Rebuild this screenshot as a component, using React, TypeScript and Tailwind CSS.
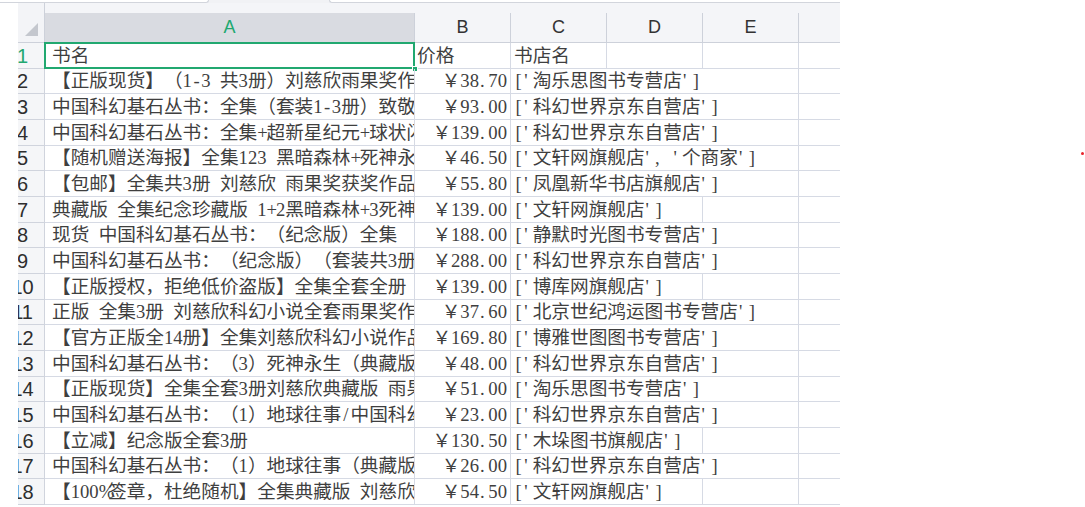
import React from "react";

type Row = { a: string; b: string; c: string; span: number; right: boolean };

const rows: Row[] = [
  { a: "书名", b: "价格", c: "书店名", span: 1, right: false },
  { a: "【正版现货】（1-3 共3册）刘慈欣雨果奖作品 三体全集", b: "￥38.70", c: "['淘乐思图书专营店']", span: 3, right: true },
  { a: "中国科幻基石丛书：全集（套装1-3册）致敬经典", b: "￥93.00", c: "['科幻世界京东自营店']", span: 3, right: true },
  { a: "中国科幻基石丛书：全集+超新星纪元+球状闪电", b: "￥139.00", c: "['科幻世界京东自营店']", span: 3, right: true },
  { a: "【随机赠送海报】全集123 黑暗森林+死神永生", b: "￥46.50", c: "['文轩网旗舰店', '个商家']", span: 3, right: true },
  { a: "【包邮】全集共3册 刘慈欣 雨果奖获奖作品", b: "￥55.80", c: "['凤凰新华书店旗舰店']", span: 3, right: true },
  { a: "典藏版 全集纪念珍藏版 1+2黑暗森林+3死神永生", b: "￥139.00", c: "['文轩网旗舰店']", span: 2, right: true },
  { a: "现货 中国科幻基石丛书：（纪念版）全集", b: "￥188.00", c: "['静默时光图书专营店']", span: 3, right: true },
  { a: "中国科幻基石丛书：（纪念版）（套装共3册）", b: "￥288.00", c: "['科幻世界京东自营店']", span: 3, right: true },
  { a: "【正版授权，拒绝低价盗版】全集全套全册", b: "￥139.00", c: "['博库网旗舰店']", span: 2, right: true },
  { a: "正版 全集3册 刘慈欣科幻小说全套雨果奖作品", b: "￥37.60", c: "['北京世纪鸿运图书专营店']", span: 3, right: true },
  { a: "【官方正版全14册】全集刘慈欣科幻小说作品集", b: "￥169.80", c: "['博雅世图图书专营店']", span: 3, right: true },
  { a: "中国科幻基石丛书：（3）死神永生（典藏版）", b: "￥48.00", c: "['科幻世界京东自营店']", span: 3, right: true },
  { a: "【正版现货】全集全套3册刘慈欣典藏版 雨果奖", b: "￥51.00", c: "['淘乐思图书专营店']", span: 3, right: true },
  { a: "中国科幻基石丛书：（1）地球往事/中国科幻", b: "￥23.00", c: "['科幻世界京东自营店']", span: 3, right: true },
  { a: "【立减】纪念版全套3册", b: "￥130.50", c: "['木垛图书旗舰店']", span: 2, right: true },
  { a: "中国科幻基石丛书：（1）地球往事（典藏版）", b: "￥26.00", c: "['科幻世界京东自营店']", span: 3, right: true },
  { a: "【100%签章，杜绝随机】全集典藏版 刘慈欣 三体", b: "￥54.50", c: "['文轩网旗舰店']", span: 2, right: true },
];

const cellFont =
  "font-['Liberation_Serif','Noto_Sans_CJK_SC',serif] text-[18.67px] text-[#3f3f3f] [text-spacing-trim:space-all]";
const hdrFont = "font-['Liberation_Sans','Noto_Sans',sans-serif]";
const grid = "border-[#d6dae4]";

// Half-width ASCII punctuation is given the fixed half-em advance it has in the sheet's font.
function Txt({ s }: { s: string }) {
  const parts: React.ReactNode[] = [];
  let buf = "";
  let k = 0;
  const flush = () => {
    if (buf) {
      parts.push(<span key={k++}>{buf}</span>);
      buf = "";
    }
  };
  for (const ch of s) {
    if (/[ -~]/.test(ch) && !/[0-9A-Za-z]/.test(ch)) {
      flush();
      const left = ch === "'" || ch === "." || ch === ",";
      parts.push(
        <span
          key={k++}
          className={left ? "inline-block w-[9.33px] text-left pl-[1px]" : "inline-block w-[9.33px] text-center"}
        >
          {ch}
        </span>
      );
    } else {
      buf += ch;
    }
  }
  flush();
  return <>{parts}</>;
}

function heightClass(i: number) {
  if (i === 0) return "h-[26px]";
  return (i - 1) % 3 === 0 ? "h-[25px]" : "h-[26px]";
}

function Cell({ w, children, extra = "" }: { w: string; children?: React.ReactNode; extra?: string }) {
  return (
    <div className={`${w} shrink-0 h-full border-r border-b ${grid} flex items-center overflow-hidden whitespace-nowrap ${extra}`}>
      {children}
    </div>
  );
}

function SheetRow({ r, i }: { r: Row; i: number }) {
  const cw = r.span === 3 ? "w-[288px]" : r.span === 2 ? "w-[192px]" : "w-[96px]";
  return (
    <div className={`flex ${heightClass(i)} shrink-0`}>
      <div className="w-[27px] shrink-0 h-full border-r border-b border-[#d0d4dd] bg-[#f5f6f8] flex items-center overflow-hidden">
        <div className="w-[9px] shrink-0 flex justify-center">
          <span className={`${hdrFont} text-[20px] leading-none whitespace-nowrap ${i === 0 ? "text-[#21a870]" : "text-[#2e2e2e]"}`}>
            {i + 1}
          </span>
        </div>
      </div>
      <div className={`relative w-[370px] shrink-0 h-full border-r border-b ${grid} flex items-center whitespace-nowrap ${cellFont} pl-[7px]`}>
        <span className="block overflow-hidden w-full">
          <Txt s={r.a} />
        </span>
        {i === 0 && (
          <>
            <div className="absolute -top-[1px] -left-[1px] -right-[1px] -bottom-[1px] border-2 border-[#21a870] pointer-events-none" />
            <div className="absolute -right-[4px] -bottom-[4px] w-[6px] h-[6px] bg-[#21a870] border border-white" />
          </>
        )}
      </div>
      <Cell w="w-[96px]" extra={`${cellFont} ${r.right ? "justify-end pr-[3px]" : "pl-[2px]"}`}>
        <Txt s={r.b} />
      </Cell>
      <Cell w={cw} extra={`${cellFont} pl-[3px]`}>
        <Txt s={r.c} />
      </Cell>
      {r.span < 2 && <Cell w="w-[96px]" />}
      {r.span < 3 && <Cell w="w-[96px]" />}
      <div className={`flex-1 h-full border-b ${grid}`} />
    </div>
  );
}

export default function App() {
  const cols = [
    { l: "A", w: "w-[370px]" },
    { l: "B", w: "w-[96px]" },
    { l: "C", w: "w-[96px]" },
    { l: "D", w: "w-[96px]" },
    { l: "E", w: "w-[96px]" },
  ];
  return (
    <div className="relative w-[1085px] h-[507px] bg-white overflow-hidden">
      <div className="w-[840px] h-full flex flex-col overflow-hidden">
        {/* top strip: bottom edges of the boxes above */}
        <div className="h-[3px] shrink-0 flex bg-[#f1f2f5]">
          <div className="w-[209px] h-full bg-white border-b border-r border-[#d2d5dc] rounded-br-[3px]" />
          <div className="w-[120px]" />
          <div className="flex-1 h-full bg-white border-b border-l border-[#d2d5dc] rounded-bl-[3px]" />
        </div>
        <div className="flex flex-1 min-h-0">
          <div className="w-[18px] shrink-0 bg-white" />
          <div className="flex-1 flex flex-col min-w-0">
            {/* column header area */}
            <div className="flex h-[40px] shrink-0">
              <div className="relative w-[27px] shrink-0 h-full bg-[#f3f4f7] border-r border-b border-[#cdd1da]">
                <svg className="absolute left-0 top-0" width="27" height="40" viewBox="0 0 27 40">
                  <polygon points="7,33 20,33 20,20" fill="#c4c7ce" />
                </svg>
              </div>
              <div className="flex-1 flex flex-col bg-[#f4f5f8]">
                <div className="h-[10px] shrink-0" />
                <div className="flex h-[30px] shrink-0">
                  {cols.map((c, k) => (
                    <div
                      key={c.l}
                      className={`${c.w} shrink-0 h-full border-r border-b border-[#cdd1da] flex items-center justify-center ${hdrFont} text-[18px] ${
                        k === 0 ? "bg-[#d9dbe1] text-[#21a870]" : "text-[#333]"
                      }`}
                    >
                      {c.l}
                    </div>
                  ))}
                  <div className="flex-1 h-full border-b border-[#cdd1da]" />
                </div>
              </div>
            </div>
            {rows.map((r, i) => (
              <SheetRow key={i} r={r} i={i} />
            ))}
          </div>
        </div>
      </div>
      <div className="absolute left-[1081px] top-[152px] w-[3px] h-[3px] rounded-full bg-[#e8222a]" />
    </div>
  );
}
